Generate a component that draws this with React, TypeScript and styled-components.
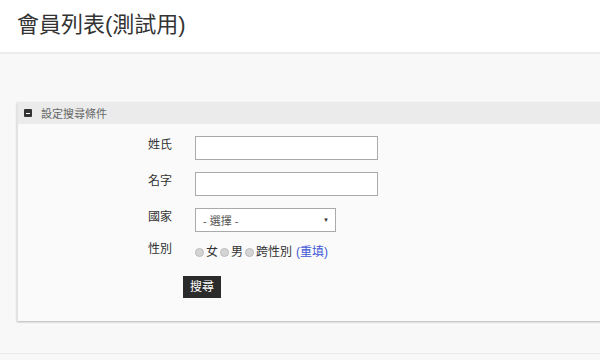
import React from "react";
import styled, { createGlobalStyle } from "styled-components";

const Global = createGlobalStyle`
  html, body { margin: 0; padding: 0; }
  body {
    background: #f8f8f8;
    overflow: hidden;
    font-family: "Liberation Sans", Arial, "Noto Sans CJK TC", sans-serif;
    color: #333;
  }
`;

const Page = styled.div`
  width: 600px;
  height: 360px;
  overflow: hidden;
  position: relative;
`;

const TopBar = styled.header`
  height: 52px;
  background: #fff;
  border-bottom: 2px solid #ececec;
  display: flex;
  align-items: center;
  padding-left: 17px;
  box-sizing: content-box;
`;

const Title = styled.h1`
  margin: 0;
  font-size: 22px;
  font-weight: 400;
  color: #333;
  line-height: 1;
  padding-bottom: 2px;
`;

const Content = styled.main`
  padding: 48px 0 0 17px;
  height: 251px;
  border-bottom: 1px solid #ececec;
`;

const Panel = styled.section`
  width: 620px;
  background: #fafafa;
  border-left: 1px solid #e4e4e4;
  box-shadow: 0 1px 2px rgba(0, 0, 0, 0.28);
`;

const PanelHead = styled.div`
  height: 22px;
  background: #ebebeb;
  display: flex;
  align-items: center;
  padding-left: 6px;
  gap: 9px;
  font-size: 11px;
  color: #666;
`;

const Toggle = styled.span`
  width: 8px;
  height: 8px;
  background: #333;
  border-radius: 1px;
  display: flex;
  align-items: center;
  justify-content: center;
  &::after {
    content: "";
    width: 4px;
    height: 1px;
    background: #fff;
  }
`;

const PanelBody = styled.div`
  padding: 12px 0 23px 130px;
`;

const FormGrid = styled.div`
  display: grid;
  grid-template-columns: 47px auto;
  row-gap: 12px;
  align-items: center;
  font-size: 12px;
`;

const Label = styled.label`
  color: #333;
  font-size: 12px;
  line-height: 14px;
  margin-top: -6px;
`;

const TextInput = styled.input`
  width: 183px;
  height: 24px;
  box-sizing: border-box;
  border: 1px solid #aaa;
  background: #fff;
  margin: 0;
  padding: 0 6px;
  font-size: 12px;
`;

const SelectBox = styled.div`
  width: 141px;
  height: 24px;
  box-sizing: border-box;
  border: 1px solid #aaa;
  background: #fff;
  display: flex;
  align-items: center;
  justify-content: space-between;
  padding: 0 6px 0 7px;
  font-size: 11px;
  color: #555;
`;

const Caret = styled.span`
  font-size: 6px;
  color: #333;
`;

const RadioRow = styled.div`
  display: flex;
  align-items: center;
  font-size: 12px;
  color: #333;
  line-height: 14px;
  margin-top: 1px;
`;

const Radio = styled.span`
  width: 7px;
  height: 7px;
  border-radius: 50%;
  background: #d4d4d4;
  border: 1px solid #bbb;
  margin-right: 2px;
  margin-left: 2px;
  &:first-child { margin-left: 0; }
`;

const ResetLink = styled.a`
  color: #4257d6;
  margin-left: 4px;
  text-decoration: none;
  font-size: 12px;
`;

const ButtonRow = styled.div`
  padding: 17px 0 0 35px;
`;

const SearchButton = styled.button`
  height: 22px;
  padding: 0 7px;
  background: #2b2b2b;
  color: #fff;
  border: 0;
  font-family: inherit;
  font-size: 12px;
  line-height: 22px;
`;

export default function App() {
  return (
    <Page>
      <Global />
      <TopBar>
        <Title>會員列表(測試用)</Title>
      </TopBar>
      <Content>
        <Panel>
          <PanelHead>
            <Toggle />
            <span>設定搜尋條件</span>
          </PanelHead>
          <PanelBody>
            <FormGrid>
              <Label>姓氏</Label>
              <TextInput />
              <Label>名字</Label>
              <TextInput />
              <Label>國家</Label>
              <SelectBox>
                <span>- 選擇 -</span>
                <Caret>▼</Caret>
              </SelectBox>
              <Label>性別</Label>
              <RadioRow>
                <Radio />女<Radio />男<Radio />跨性別
                <ResetLink href="#">(重填)</ResetLink>
              </RadioRow>
            </FormGrid>
            <ButtonRow>
              <SearchButton>搜尋</SearchButton>
            </ButtonRow>
          </PanelBody>
        </Panel>
      </Content>
    </Page>
  );
}
